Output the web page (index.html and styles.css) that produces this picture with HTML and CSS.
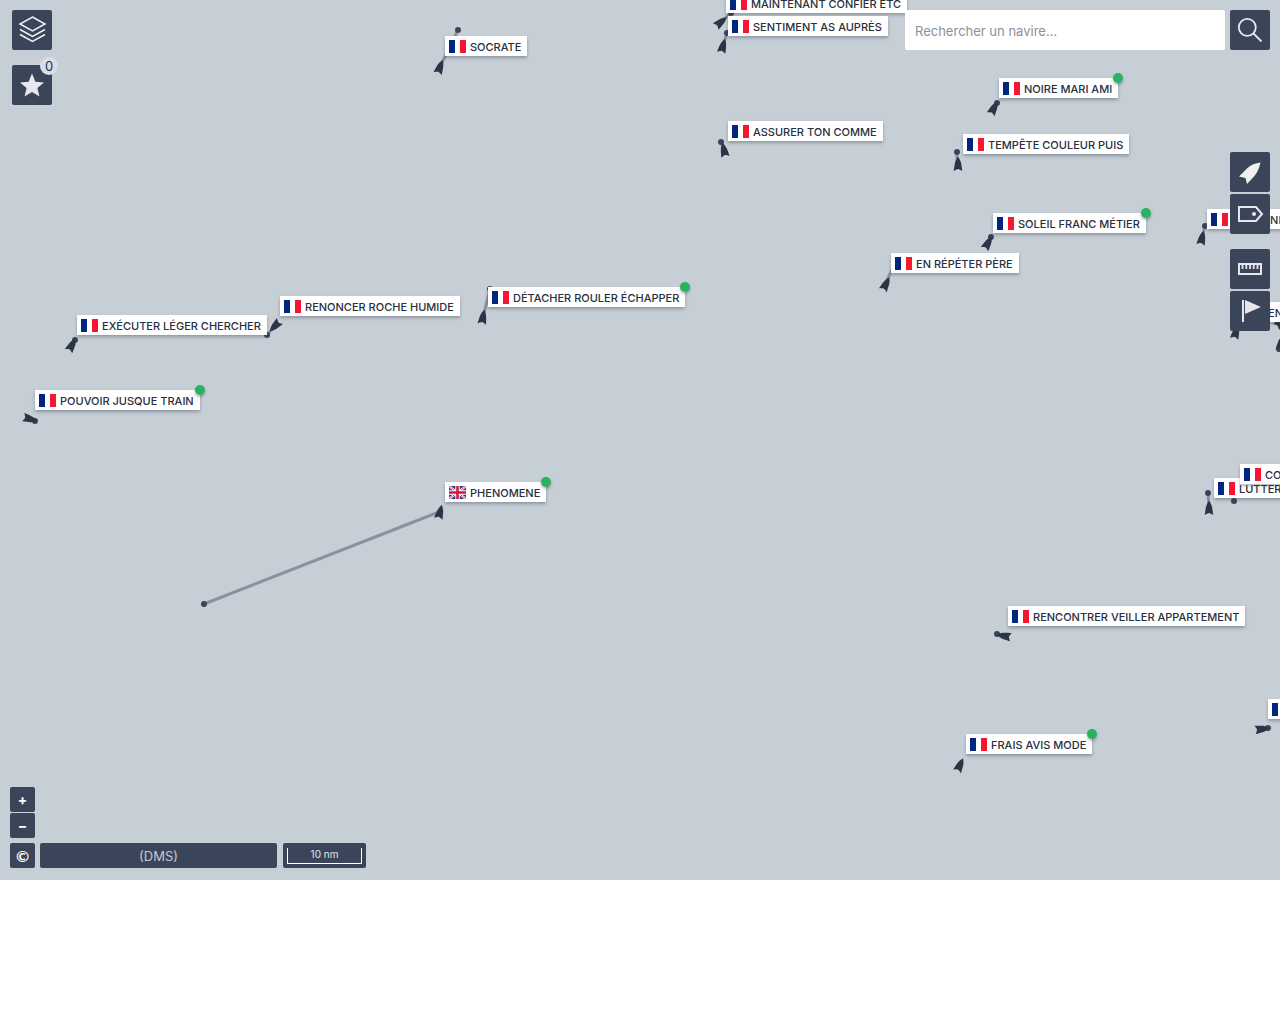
FILE: index.html
```html
<!DOCTYPE html>
<html lang="fr">
<head>
<meta charset="utf-8">
<meta name="viewport" content="width=device-width, initial-scale=1">
<title>Carte des navires</title>
<link rel="stylesheet" href="styles.css">
</head>
<body>
<svg class="defs" aria-hidden="true">
  <symbol id="fr" viewBox="0 0 17 13"><path fill="#fff" d="M0 0h17v13H0z"/><path fill="#00267f" d="M0 0h6v13H0z"/><path fill="#f8152f" d="M11 0h6v13h-6z"/></symbol>
  <symbol id="gb" viewBox="0 0 17 13"><path fill="#1c3c86" d="M0 0h17v13H0z"/><path stroke="#fff" stroke-width="2.200" d="M0 0l17 13M17 0L0 13"/><path stroke="#d8183b" stroke-width=".8" d="M0 0l17 13M17 0L0 13"/><path stroke="#fff" stroke-width="4.400" d="M8.500 0v13M0 6.500h17"/><path stroke="#d8183b" stroke-width="2.600" d="M8.500 0v13M0 6.500h17"/></symbol>
  <path id="ship" d="M0-7.500L2-4C3.400-1 3.500 2 4.300 7L1.500 5.500L0 5L-1.500 5.500L-4.300 7C-3.500 2-3.400-1-2-4Z"/>
</svg>
<main class="map">
  <svg class="vessels" aria-hidden="true">
    <g class="track">
      <path d="M440 67L458 30M721 22l10-9M723 46l4-13M724 150l-3-8M994 108l3-5M957 164v-12M988 243l3-6M885 284l10-20M1202 238l3-12M72 345l3-5M275 326l-8 9M483 317l7-28M30 419l5 2M439 512L204 604M1209 507l-1-14M1004 636l-7-2M1262 729l6-1"/>
    </g>
    <g class="dots">
      <circle cx="458" cy="30" r="3"/><circle cx="731" cy="13" r="3"/><circle cx="727" cy="33" r="3"/><circle cx="721" cy="142" r="3"/><circle cx="997" cy="103" r="3"/><circle cx="957" cy="152" r="3"/><circle cx="991" cy="237" r="3"/><circle cx="1205" cy="226" r="3"/><circle cx="75" cy="340" r="3"/><circle cx="267" cy="335" r="3"/><circle cx="490" cy="289" r="3"/><circle cx="35" cy="421" r="3"/><circle cx="204" cy="604" r="3"/><circle cx="1208" cy="493" r="3"/><circle cx="1234" cy="501" r="3"/><circle cx="997" cy="634" r="3"/><circle cx="1268" cy="728" r="3"/><circle cx="1279" cy="349" r="3"/>
    </g>
    <g class="hulls">
      <use href="#ship" transform="translate(440 67) rotate(20)"/>
      <use href="#ship" transform="translate(721 22) rotate(50)"/>
      <use href="#ship" transform="translate(723 46) rotate(15)"/>
      <use href="#ship" transform="translate(724 150) rotate(-12)"/>
      <use href="#ship" transform="translate(994 108) rotate(28)"/>
      <use href="#ship" transform="translate(958 164)"/>
      <use href="#ship" transform="translate(988 243) rotate(30)"/>
      <use href="#ship" transform="translate(886 284) rotate(27)"/>
      <use href="#ship" transform="translate(1202 238) rotate(12)"/>
      <use href="#ship" transform="translate(1236 332) rotate(15)"/>
      <use href="#ship" transform="translate(1281 322) rotate(45)"/>
      <use href="#ship" transform="translate(1281 343) rotate(10)"/>
      <use href="#ship" transform="translate(72 345) rotate(30)"/>
      <use href="#ship" transform="translate(275 326) rotate(225)"/>
      <use href="#ship" transform="translate(483 317) rotate(10)"/>
      <use href="#ship" transform="translate(30 419) rotate(105)"/>
      <use href="#ship" transform="translate(440 512) rotate(14)"/>
      <use href="#ship" transform="translate(1209 508)"/>
      <use href="#ship" transform="translate(1004 636) rotate(280)"/>
      <use href="#ship" transform="translate(960 765) rotate(25)"/>
      <use href="#ship" transform="translate(1262 729) rotate(82)"/>
    </g>
  </svg>

  <div class="tag" style="left:445px;top:36px"><svg class="flag"><use href="#fr"/></svg>SOCRATE</div>
  <div class="tag" style="left:726px;top:-7px"><svg class="flag"><use href="#fr"/></svg>MAINTENANT CONFIER ETC</div>
  <div class="tag" style="left:728px;top:16px"><svg class="flag"><use href="#fr"/></svg>SENTIMENT AS AUPRÈS</div>
  <div class="tag" style="left:728px;top:121px"><svg class="flag"><use href="#fr"/></svg>ASSURER TON COMME</div>
  <div class="tag online" style="left:999px;top:78px"><svg class="flag"><use href="#fr"/></svg>NOIRE MARI AMI</div>
  <div class="tag" style="left:963px;top:134px"><svg class="flag"><use href="#fr"/></svg>TEMPÊTE COULEUR PUIS</div>
  <div class="tag online" style="left:993px;top:213px"><svg class="flag"><use href="#fr"/></svg>SOLEIL FRANC MÉTIER</div>
  <div class="tag" style="left:891px;top:253px"><svg class="flag"><use href="#fr"/></svg>EN RÉPÉTER PÈRE</div>
  <div class="tag" style="left:1207px;top:209px"><svg class="flag"><use href="#fr"/></svg>SOUVENI</div>
  <div class="tag" style="left:1233px;top:302px"><svg class="flag"><use href="#fr"/></svg>MEN</div>
  <div class="tag online" style="left:488px;top:287px"><svg class="flag"><use href="#fr"/></svg>DÉTACHER ROULER ÉCHAPPER</div>
  <div class="tag" style="left:280px;top:296px"><svg class="flag"><use href="#fr"/></svg>RENONCER ROCHE HUMIDE</div>
  <div class="tag" style="left:77px;top:315px"><svg class="flag"><use href="#fr"/></svg>EXÉCUTER LÉGER CHERCHER</div>
  <div class="tag online" style="left:35px;top:390px"><svg class="flag"><use href="#fr"/></svg>POUVOIR JUSQUE TRAIN</div>
  <div class="tag online" style="left:445px;top:482px"><svg class="flag"><use href="#gb"/></svg>PHENOMENE</div>
  <div class="tag" style="left:1214px;top:478px"><svg class="flag"><use href="#fr"/></svg>LUTTER</div>
  <div class="tag" style="left:1240px;top:464px"><svg class="flag"><use href="#fr"/></svg>CO</div>
  <div class="tag" style="left:1008px;top:606px"><svg class="flag"><use href="#fr"/></svg>RENCONTRER VEILLER APPARTEMENT</div>
  <div class="tag online" style="left:966px;top:734px"><svg class="flag"><use href="#fr"/></svg>FRAIS AVIS MODE</div>
  <div class="tag" style="left:1268px;top:699px"><svg class="flag"><use href="#fr"/></svg></div>

  <div class="corner top-left">
    <button class="btn" type="button" aria-label="Couches"><svg width="40" height="40" fill="none" stroke="#f2f0f4" stroke-width="1.500"><path d="M20.500 7L33 14L20.500 21L8 14Z"/><path d="M8 19.500l12.500 7L33 19.500M8 24.500l12.500 7L33 24.500"/></svg></button>
    <button class="btn" type="button" aria-label="Favoris"><svg width="40" height="40" fill="#e9e7ee"><path d="M20 8.500l3.400 8.200 8.600.7-6.600 5.600 2.100 8.500L20 27l-7.500 4.500 2.100-8.500L8 17.400l8.600-.7Z"/></svg><span class="count">0</span></button>
  </div>

  <form class="corner search">
    <input type="text" placeholder="Rechercher un navire..." aria-label="Rechercher un navire">
    <button class="btn" type="button" aria-label="Rechercher"><svg width="40" height="40" fill="none" stroke="#e9e7ee" stroke-width="1.800"><circle cx="17.300" cy="17.300" r="8.500"/><path d="M23.500 23.500l8 8"/></svg></button>
  </form>

  <div class="corner tools">
    <div class="group">
      <button class="btn" type="button" aria-label="Navires"><svg width="40" height="40" fill="#f0f0f0"><path d="M30.500 10.500C29 17 27 21 24 24.500L17 32L15.500 26L9 24.500L17 16.500C20 13.500 24 11.500 30.500 10.500Z"/></svg></button>
      <button class="btn" type="button" aria-label="Étiquettes"><svg width="40" height="40" fill="none" stroke="#e9e7ee" stroke-width="2"><path d="M9 13h17l6 7-6 7H9Z"/><circle cx="24" cy="20" r="2" fill="#e9e7ee" stroke="none"/></svg></button>
    </div>
    <div class="group">
      <button class="btn" type="button" aria-label="Mesurer"><svg width="40" height="40" fill="none" stroke="#e9e7ee" stroke-width="2"><path d="M9 15h22v10H9Z"/><path stroke-width="1.800" d="M12.500 15v5M16.300 15v5M20 15v5M23.700 15v5M27.500 15v5"/></svg></button>
      <button class="btn" type="button" aria-label="Repère"><svg width="40" height="40" fill="#e9e7ee"><path d="M12 9h2v22h-2zM15 9l16 7-16 7Z"/></svg></button>
    </div>
  </div>

  <div class="corner bottom-left">
    <div class="zoom">
      <button class="btn small" type="button" aria-label="Zoom avant">+</button>
      <button class="btn small" type="button" aria-label="Zoom arrière">−</button>
    </div>
    <div class="status">
      <button class="btn small credits" type="button" aria-label="Crédits">©</button>
      <button class="coords" type="button">(DMS)</button>
      <div class="scale"><div class="bar">10 nm</div></div>
    </div>
  </div>
</main>
</body>
</html>
```
FILE: styles.css
```css
* { box-sizing: border-box; }

body {
  margin: 0;
  background: #fff;
  font-family: Inter, "Noto Sans", sans-serif;
}

button, input { font-family: inherit; margin: 0; padding: 0; border: 0; }
button { cursor: pointer; }

.defs { position: absolute; width: 0; height: 0; }

.map {
  position: relative;
  height: calc(100vh - 144px);
  overflow: hidden;
  background: #c6ced6;
}

.vessels { position: absolute; inset: 0; width: 100%; height: 100%; }
.track { fill: none; stroke: #8b91a0; stroke-width: 3; }
.dots { fill: #3b4559; }
.hulls { fill: #2c3547; }

.tag {
  position: absolute;
  display: flex;
  align-items: center;
  gap: 4px;
  height: 20px;
  padding: 1px 6px 0 4px;
  background: #fff;
  box-shadow: 0 2px 3px rgba(40, 45, 60, .35);
  color: #282f3e;
  font-size: 11px;
  font-weight: 500;
  white-space: nowrap;
}

.flag { flex: none; width: 17px; height: 13px; }

.online::after {
  content: "";
  position: absolute;
  top: -5px;
  right: -5px;
  width: 10px;
  height: 10px;
  border-radius: 50%;
  background: #29b361;
  box-shadow: 0 2px 3px rgba(40, 45, 60, .35);
}

.corner { position: absolute; display: flex; }
.top-left { top: 10px; left: 12px; flex-direction: column; gap: 15px; }
.search { top: 10px; right: 10px; gap: 5px; }
.tools { top: 152px; right: 10px; flex-direction: column; gap: 15px; }
.group { display: flex; flex-direction: column; gap: 2px; }
.bottom-left { bottom: 12px; left: 10px; flex-direction: column; gap: 5px; }
.zoom { display: flex; flex-direction: column; gap: 1px; }
.status { display: flex; gap: 5px; }

.btn {
  position: relative;
  width: 40px;
  height: 40px;
  border-radius: 2px;
  background: #3b455a;
  color: #fff;
}
.btn svg { display: block; }
.small { width: 25px; height: 25px; font-size: 14px; font-weight: 700; line-height: 25px; }
.credits { font-family: Lato, sans-serif; font-size: 16px; }

.count {
  position: absolute;
  top: -8px;
  right: -6px;
  width: 18px;
  height: 18px;
  border-radius: 50%;
  background: #d7dee7;
  color: #282f3e;
  font-size: 13px;
  line-height: 18px;
}

.search input {
  width: 320px;
  height: 40px;
  padding: 2px 10px 0;
  border-radius: 2px;
  background: #fff;
  color: #282f3e;
  font-size: 13px;
}
.search input::placeholder { color: #8d8f99; opacity: 1; }

.coords {
  width: 237px;
  height: 25px;
  border-radius: 2px;
  background: #3b455a;
  color: #c5cad6;
  font-size: 13px;
}

.scale {
  width: 83px;
  height: 25px;
  margin-left: 1px;
  padding: 5px 4px 4px;
  border-radius: 2px;
  background: #3b455a;
}
.bar {
  height: 16px;
  border: 1px solid #fff;
  border-top: 0;
  color: #e2e5ea;
  font-size: 10px;
  line-height: 13px;
  text-align: center;
}
```
